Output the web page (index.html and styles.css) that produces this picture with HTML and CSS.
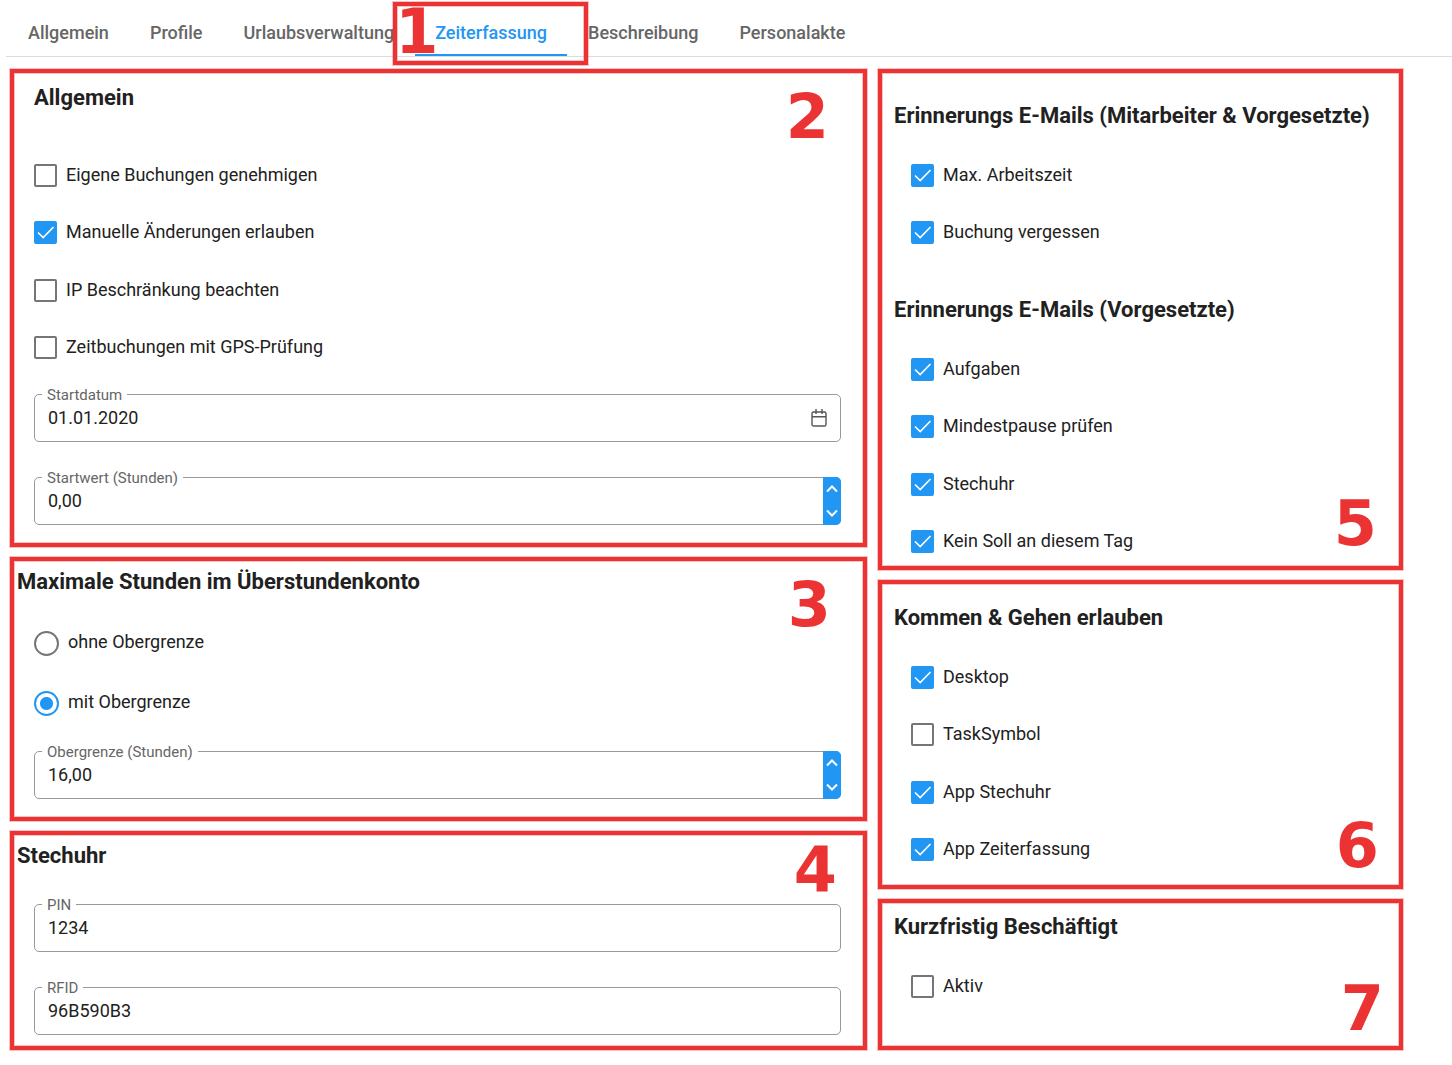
FILE: index.html
```html
<!DOCTYPE html>
<html lang="de">
<head>
<meta charset="utf-8">
<meta name="viewport" content="width=device-width, initial-scale=1">
<title>Zeiterfassung</title>
<link rel="stylesheet" href="styles.css">
</head>
<body>
<nav class="tabs">
  <a class="tab" href="#allgemein">Allgemein</a>
  <a class="tab" href="#profile">Profile</a>
  <a class="tab" href="#urlaub">Urlaubsverwaltung</a>
  <a class="tab tab-active" href="#zeit" aria-current="page">Zeiterfassung<span class="tab-frame"><span class="number number-tab">1</span></span></a>
  <a class="tab" href="#beschreibung">Beschreibung</a>
  <a class="tab" href="#personalakte">Personalakte</a>
</nav>

<main class="columns">
  <div class="column">
    <section class="frame general">
      <h2 class="title title-inset">Allgemein</h2>
      <ul class="options">
        <li><label class="option"><input class="check" type="checkbox"><span>Eigene Buchungen genehmigen</span></label></li>
        <li><label class="option"><input class="check" type="checkbox" checked><span>Manuelle Änderungen erlauben</span></label></li>
        <li><label class="option"><input class="check" type="checkbox"><span>IP Beschränkung beachten</span></label></li>
        <li><label class="option"><input class="check" type="checkbox"><span>Zeitbuchungen mit GPS-Prüfung</span></label></li>
      </ul>
      <div class="fields">
        <div class="field">
          <label class="field-label" for="startdatum">Startdatum</label>
          <input class="field-input" id="startdatum" type="text" value="01.01.2020">
          <button class="calendar" type="button" aria-label="Kalender öffnen">
            <svg width="16" height="20" viewBox="0 0 16 20" fill="none" stroke="#555" stroke-width="1.4"><rect x="1" y="4" width="14" height="14" rx="1.6"/><path d="M1 8.7h14M5 1v5M11 1v5"/></svg>
          </button>
        </div>
        <div class="field">
          <label class="field-label" for="startwert">Startwert (Stunden)</label>
          <input class="field-input" id="startwert" type="text" inputmode="decimal" value="0,00">
          <div class="spinner">
            <button class="spin" type="button" aria-label="Erhöhen"><svg width="12" height="8" viewBox="0 0 12 8"><path d="M1 6.5 6 1.5l5 5"/></svg></button>
            <button class="spin" type="button" aria-label="Verringern"><svg width="12" height="8" viewBox="0 0 12 8"><path d="M1 1.5l5 5 5-5"/></svg></button>
          </div>
        </div>
      </div>
      <span class="number number-general">2</span>
    </section>

    <section class="frame overtime">
      <h2 class="title">Maximale Stunden im Überstundenkonto</h2>
      <div class="radios">
        <label class="option"><input class="radio" type="radio" name="grenze"><span>ohne Obergrenze</span></label>
        <label class="option"><input class="radio" type="radio" name="grenze" checked><span>mit Obergrenze</span></label>
      </div>
      <div class="fields">
        <div class="field">
          <label class="field-label" for="obergrenze">Obergrenze (Stunden)</label>
          <input class="field-input" id="obergrenze" type="text" inputmode="decimal" value="16,00">
          <div class="spinner">
            <button class="spin" type="button" aria-label="Erhöhen"><svg width="12" height="8" viewBox="0 0 12 8"><path d="M1 6.5 6 1.5l5 5"/></svg></button>
            <button class="spin" type="button" aria-label="Verringern"><svg width="12" height="8" viewBox="0 0 12 8"><path d="M1 1.5l5 5 5-5"/></svg></button>
          </div>
        </div>
      </div>
      <span class="number number-overtime">3</span>
    </section>

    <section class="frame clock">
      <h2 class="title">Stechuhr</h2>
      <div class="fields">
        <div class="field">
          <label class="field-label" for="pin">PIN</label>
          <input class="field-input" id="pin" type="text" value="1234">
        </div>
        <div class="field">
          <label class="field-label" for="rfid">RFID</label>
          <input class="field-input" id="rfid" type="text" value="96B590B3">
        </div>
      </div>
      <span class="number number-clock">4</span>
    </section>
  </div>

  <div class="column">
    <section class="frame reminders">
      <h2 class="title">Erinnerungs E-Mails (Mitarbeiter &amp; Vorgesetzte)</h2>
      <ul class="options">
        <li><label class="option"><input class="check" type="checkbox" checked><span>Max. Arbeitszeit</span></label></li>
        <li><label class="option"><input class="check" type="checkbox" checked><span>Buchung vergessen</span></label></li>
      </ul>
      <h2 class="title title-next">Erinnerungs E-Mails (Vorgesetzte)</h2>
      <ul class="options">
        <li><label class="option"><input class="check" type="checkbox" checked><span>Aufgaben</span></label></li>
        <li><label class="option"><input class="check" type="checkbox" checked><span>Mindestpause prüfen</span></label></li>
        <li><label class="option"><input class="check" type="checkbox" checked><span>Stechuhr</span></label></li>
        <li><label class="option"><input class="check" type="checkbox" checked><span>Kein Soll an diesem Tag</span></label></li>
      </ul>
      <span class="number number-reminders">5</span>
    </section>

    <section class="frame presence">
      <h2 class="title">Kommen &amp; Gehen erlauben</h2>
      <ul class="options">
        <li><label class="option"><input class="check" type="checkbox" checked><span>Desktop</span></label></li>
        <li><label class="option"><input class="check" type="checkbox"><span>TaskSymbol</span></label></li>
        <li><label class="option"><input class="check" type="checkbox" checked><span>App Stechuhr</span></label></li>
        <li><label class="option"><input class="check" type="checkbox" checked><span>App Zeiterfassung</span></label></li>
      </ul>
      <span class="number number-presence">6</span>
    </section>

    <section class="frame short-term">
      <h2 class="title">Kurzfristig Beschäftigt</h2>
      <ul class="options">
        <li><label class="option"><input class="check" type="checkbox"><span>Aktiv</span></label></li>
      </ul>
      <span class="number number-short-term">7</span>
    </section>
  </div>
</main>
</body>
</html>
```
FILE: styles.css
```css
:root {
  --blue: #2196f3;
  --red: #eb3333;
  --fringe: rgba(235, 51, 51, 0.3);
  --text: #212121;
  --muted: #666;
  --line: #999;
}

* { box-sizing: border-box; }

body {
  margin: 0;
  background: #fff;
  color: var(--text);
  font: 18px/24px Roboto, "Liberation Sans", sans-serif;
}

/* Tabs */
.tabs {
  display: flex;
  gap: 1px;
  margin-left: 6px;
  padding-left: 2px;
  border-bottom: 1px solid #dcdcdc;
}

.tab {
  position: relative;
  padding: 21px 20px 11px;
  color: var(--muted);
  font-weight: 500;
  text-decoration: none;
  white-space: nowrap;
}

.tab-active {
  color: var(--blue);
  box-shadow: inset 0 -2px var(--blue);
}

.tab-frame {
  position: absolute;
  z-index: 1;
  inset: 2px -21px -9px -22px;
  border: 4px solid var(--red);
  box-shadow: 0 0 0 1px var(--fringe), inset 0 0 0 1px var(--fringe);
}

/* Framed sections */
.columns {
  display: grid;
  grid-template-columns: 857fr 525fr;
  gap: 11px;
  padding: 12px 49px 15px 10px;
}

.column {
  display: flex;
  flex-direction: column;
  gap: 10px;
}

.frame {
  position: relative;
  border: 4px solid var(--red);
  box-shadow: 0 0 0 1px var(--fringe), inset 0 0 0 1px var(--fringe);
}

.general { padding: 11px 22px 18px 20px; }
.overtime { padding: 7px 22px 18px 20px; }
.clock { padding: 7px 22px 11px 20px; }
.reminders { padding: 29px 12px 13px 29px; }
.presence { padding: 20px 12px 24px 29px; }
.short-term { padding: 10px 12px 48px 29px; }

.title {
  margin: 0 0 34px -17px;
  font-size: 22px;
  font-weight: 700;
  line-height: 28px;
  white-space: nowrap;
}

.title-inset { margin: 0 0 52px; }
.title-next { margin-top: 52px; }

.number {
  position: absolute;
  color: var(--red);
  font: 700 62px/62px "DejaVu Sans", sans-serif;
}

.number-tab { top: -5px; left: -2px; }
.number-general { top: 13px; right: 34px; }
.number-overtime { top: 13px; right: 32px; }
.number-clock { top: 4px; right: 26px; }
.number-reminders { right: 22px; bottom: 11px; }
.number-presence { right: 20px; bottom: 8px; }
.number-short-term { right: 15px; bottom: 6px; }

/* Options */
.options {
  margin: 0;
  padding: 0;
  list-style: none;
}

.options li + li { margin-top: 34px; }
.options li + li:nth-child(odd) { margin-top: 35px; }

.option {
  display: flex;
  align-items: center;
  gap: 9px;
  line-height: 22px;
}

.option span { margin-bottom: 2px; }

.options .option { height: 23px; }

.check,
.radio {
  flex: none;
  margin: 0;
  border: 2px solid #757575;
  background: #fff;
  appearance: none;
}

.check {
  width: 23px;
  height: 23px;
  border-radius: 2px;
}

.check:checked {
  border-color: var(--blue);
  background: var(--blue) url("data:image/svg+xml,%3Csvg xmlns='http://www.w3.org/2000/svg' viewBox='0 0 19 19'%3E%3Cpath d='M2 9.5l5.2 5L17.5 4' fill='none' stroke='white' stroke-width='1.6'/%3E%3C/svg%3E") center / 19px 19px no-repeat;
}

.radios {
  display: grid;
  gap: 35px;
  margin-top: 35px;
}

.radios .option span { margin-bottom: 3px; }

.radio {
  width: 25px;
  height: 25px;
  border-radius: 50%;
}

.radio:checked {
  border-color: var(--blue);
  background: radial-gradient(circle, var(--blue) 6px, #fff 7px);
}

/* Fields */
.fields {
  display: grid;
  gap: 35px;
}

.options + .fields,
.radios + .fields { margin-top: 35px; }

.field {
  position: relative;
  display: flex;
  height: 48px;
  border: 1px solid var(--line);
  border-radius: 5px;
}

.field-label {
  position: absolute;
  top: -10px;
  left: 7px;
  padding: 0 5px;
  background: #fff;
  color: var(--muted);
  font-size: 15px;
  line-height: 20px;
}

.field-input {
  flex: 1;
  min-width: 0;
  padding: 0 13px;
  border: 0;
  outline: 0;
  background: none;
  color: inherit;
  font: inherit;
}

.calendar {
  display: flex;
  align-items: center;
  padding: 0 13px;
  border: 0;
  background: none;
}

.spinner {
  display: grid;
  width: 18px;
  margin: -1px;
  overflow: hidden;
  border-radius: 0 5px 5px 0;
}

.spin {
  display: grid;
  place-items: center;
  padding: 0;
  border: 0;
  background: var(--blue);
}

.spin path {
  fill: none;
  stroke: #fff;
  stroke-width: 2;
}
```
